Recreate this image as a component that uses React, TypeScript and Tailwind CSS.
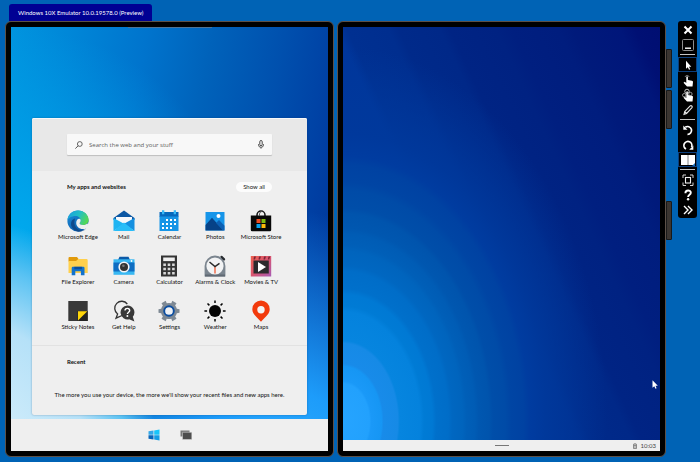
import type { ReactNode } from "react";

type IconProps = { children: ReactNode; box?: string; className?: string };

function Svg({ children, box = "0 0 22 22", className = "size-[22px]" }: IconProps) {
  return (
    <svg viewBox={box} className={className} aria-hidden="true" fill="none">
      {children}
    </svg>
  );
}

const apps: { name: string; icon: ReactNode }[] = [
  {
    name: "Microsoft Edge",
    icon: (
      <Svg>
        <defs>
          <linearGradient id="edgeTop" x1="0" y1="0.2" x2="1" y2="0.6">
            <stop offset="0" stopColor="#1c9fe0" />
            <stop offset="0.5" stopColor="#22bfc4" />
            <stop offset="1" stopColor="#56d94f" />
          </linearGradient>
          <linearGradient id="edgeSide" x1="0" y1="0" x2="0.6" y2="1">
            <stop offset="0" stopColor="#1b8fdc" />
            <stop offset="1" stopColor="#0d5cab" />
          </linearGradient>
        </defs>
        <circle cx="11" cy="11" r="10.6" fill="url(#edgeSide)" />
        <path d="M7.4 11.5c-.6 4.600 3 8.900 7.400 8.900 2 0 3.700-.8 5-2.200-1.900 2.300-5 3.500-8.300 3.500-5-1.200-8.300-5-7.300-9.500.6-2 2-3.300 3.800-3.700Z" fill="#114a8b" />
        <path d="M.4 10.200C.9 4.500 5.400.4 11 .4c6.200 0 10.600 4.500 10.600 9.300 0 3.200-2.400 5.300-5.400 5.300-2.600 0-3.600-.9-3.600-1.700 0-.8 1.100-1.100 1.100-3.100 0-2.300-2.200-4.300-5.300-4.300-3.800 0-7 2.200-8 4.300Z" fill="url(#edgeTop)" />
        <path d="M13.700 10.200c0 2-1.100 2.300-1.100 3.100 0 .8 1 1.700 3.600 1.700 1.800 0 3.200-.7 4.200-1.800l.9 1.700-1.500 3c-1.200.8-2.600 1.200-4 1.200-3.800 0-6.600-3-6.600-6.100 0-2.400 1.300-4.200 2.900-4.200.9 0 1.600.6 1.600 1.400Z" fill="#efefef" />
      </Svg>
    ),
  },
  {
    name: "Mail",
    icon: (
      <Svg>
        <path d="M.5 8 11 .4 21.500 8v2H.5Z" fill="#0b57a4" />
        <path d="M3 7h16v8H3Z" fill="#f6f8fb" />
        <path d="M.5 8v13L11 13.800Z" fill="#1fb4f2" />
        <path d="M21.500 8v13L11 13.800Z" fill="#1590e0" />
        <path d="M.5 21 11 12.500 21.500 21Z" fill="#28bdf8" />
      </Svg>
    ),
  },
  {
    name: "Calendar",
    icon: (
      <Svg>
        <path d="M1.500 2h19v5h-19Z" fill="#0669bd" />
        <path d="M1.500 6.500h19V21h-19Z" fill="#1795e6" />
        <path d="M4 .3h2.300v4H4ZM15.700.3H18v4h-2.300Z" fill="#38b9f6" />
        <path
          d="M8 9h2v2H8Zm4 0h2v2h-2Zm4 0h2v2h-2ZM4 13h2v2H4Zm4 0h2v2H8Zm4 0h2v2h-2Zm4 0h2v2h-2ZM4 17h2v2H4Zm4 0h2v2H8Zm4 0h2v2h-2Z"
          fill="#fff"
        />
      </Svg>
    ),
  },
  {
    name: "Photos",
    icon: (
      <Svg>
        <path d="M1.500 2h19v18.500h-19Z" fill="#1695e9" />
        <path d="m1.500 15 6.500-7.300L19.500 20.500h-18Z" fill="#064287" />
        <path d="m12 13 3-3 5.500 5.800v4.700h-1.200Z" fill="#0c60b4" />
        <circle cx="14.500" cy="6" r="2" fill="#fff" />
      </Svg>
    ),
  },
  {
    name: "Microsoft Store",
    icon: (
      <Svg>
        <path d="M7 7V5a4 4 0 0 1 8 0v2" stroke="#111" strokeWidth="1.500" />
        <path d="M9.500 5.500V3.800a3 3 0 0 1 3-2.500" stroke="#555" strokeWidth="1" />
        <path d="M.8 5.500h20.400V20a1.300 1.300 0 0 1-1.300 1.300H2.100A1.300 1.300 0 0 1 .8 20Z" fill="#080808" />
        <path d="M6.500 9h4v4h-4Z" fill="#f04e25" />
        <path d="M11.500 9h4v4h-4Z" fill="#80bb10" />
        <path d="M6.500 14h4v4h-4Z" fill="#08a4ef" />
        <path d="M11.500 14h4v4h-4Z" fill="#fdb90a" />
      </Svg>
    ),
  },
  {
    name: "File Explorer",
    icon: (
      <Svg>
        <path d="M1.500 3a1 1 0 0 1 1-1h7.500l1.500 2-1.500 2.500H1.500Z" fill="#e19a0b" />
        <path d="M1.500 6H9l2.300-2h8.200a1.200 1.200 0 0 1 1.200 1.200V18H1.500Z" fill="#ffd04d" />
        <path d="M4.700 20.300V13a1.200 1.200 0 0 1 1.200-1.200h10.400a1.200 1.200 0 0 1 1.200 1.200v7.300h-3.600v-4H8.300v4Z" fill="#1272cc" />
        <path d="M7.300 11.800h7.600v2.400H7.300Z" fill="#0c4f9c" />
      </Svg>
    ),
  },
  {
    name: "Camera",
    icon: (
      <Svg>
        <path d="M6.500 1.800h9L17 5H5Z" fill="#0c5aa8" />
        <path d="M.5 4.300h21v15.500H.5Z" fill="#38b8f2" />
        <path d="M.5 7.500h21v9H.5Z" fill="#0f6dc2" />
        <circle cx="11" cy="12" r="5.600" fill="#f3f5f7" />
        <circle cx="11" cy="12" r="4" fill="#333" />
        <circle cx="10.400" cy="10.800" r="1.300" fill="#777" />
        <circle cx="18.500" cy="6" r=".9" fill="#fff" />
      </Svg>
    ),
  },
  {
    name: "Calculator",
    icon: (
      <Svg>
        <path d="M3 .5h16v21H3Z" fill="#343434" />
        <path d="M5.200 2.500h11.600v3.600H5.200Z" fill="#f0f0f0" />
        <path
          d="M5.300 8.500h2.600v2.500H5.300Zm4.400 0h2.600v2.500H9.700Zm4.400 0h2.600v2.500h-2.600ZM5.300 12.700h2.600v2.500H5.300Zm4.400 0h2.600v2.500H9.700Zm4.400 0h2.600v2.500h-2.600ZM5.300 17h2.600v2.500H5.300Zm4.400 0h2.600v2.500H9.700Zm4.400 0h2.600v2.500h-2.600Z"
          fill="#d9d9d9"
        />
      </Svg>
    ),
  },
  {
    name: "Alarms & Clock",
    icon: (
      <Svg>
        <path d="M.6 11A10.400 10.400 0 0 1 21.400 11v10.400H.6Z" fill="#7b858f" />
        <path d="M1 19.500h20v2H1Z" fill="#606973" />
        <path d="m17.500 1.800 2.600 2.600" stroke="#272b30" strokeWidth="2.200" strokeLinecap="round" />
        <circle cx="11" cy="11" r="8.600" fill="#f2f3f4" />
        <path d="M11 11.500v7" stroke="#f05a35" strokeWidth="1.300" />
        <path d="M5.500 7 11 11.500l4.500-3.200" stroke="#292929" strokeWidth="1.500" />
      </Svg>
    ),
  },
  {
    name: "Movies & TV",
    icon: (
      <Svg>
        <defs>
          <linearGradient id="film" x1="0" y1="0" x2="1" y2="1">
            <stop offset="0" stopColor="#ee614f" />
            <stop offset="0.5" stopColor="#d95570" />
            <stop offset="1" stopColor="#a85bb5" />
          </linearGradient>
        </defs>
        <path d="M.8 1h20.400v20.500H.8Z" fill="url(#film)" />
        <path d="M4 1.500h2l-1 3H3.500Zm5 0h2l-1 3H8.500Zm5 0h2l-1 3h-1.500Zm4.500 0h1.700l-1 3h-1.400Z" fill="#7a2437" />
        <path d="M3.500 5.500h15.300v13H3.500Z" fill="#2c2a2d" />
        <path d="m8 7 8 5-8 5Z" fill="#fff" />
      </Svg>
    ),
  },
  {
    name: "Sticky Notes",
    icon: (
      <Svg>
        <path d="M1.300 1h19.400v20H1.300Z" fill="#383838" />
        <path d="M20.700 11v10H10.500V11Z" fill="#242424" />
        <path d="M20.300 11.300 11 20.600v-9.300Z" fill="#ffd60a" />
      </Svg>
    ),
  },
  {
    name: "Get Help",
    icon: (
      <Svg>
        <path d="M9 15.500 3 18.200l1.600-4.300A7 7 0 1 1 14.300 4" stroke="#333" strokeWidth="1.300" />
        <path d="M14.300 5.400a7 7 0 0 1 5.500 11.400l1.600 4.600-5.200-2.200A7 7 0 1 1 14.300 5.400Z" fill="#383838" />
        <path d="M12 10.500c0-3 4.700-2.700 4.700 0 0 1.700-2.300 1.700-2.300 3.500" stroke="#fff" strokeWidth="1.400" />
        <circle cx="14.400" cy="16" r="1" fill="#fff" />
      </Svg>
    ),
  },
  {
    name: "Settings",
    icon: (
      <Svg>
        <path
          d="m7.700.8 1 2.500a8 8 0 0 1 4.600 0l1-2.500 4.200 2.400-1.400 2.400a8 8 0 0 1 1.700 3.200l2.700.4v3.600l-2.700.4a8 8 0 0 1-1.700 3.200l1.400 2.400-4.200 2.400-1-2.500a8 8 0 0 1-4.600 0l-1 2.500-4.200-2.400 1.400-2.400a8 8 0 0 1-1.700-3.200l-2.700-.4V9.200l2.700-.4a8 8 0 0 1 1.700-3.200L3.500 3.200Z"
          fill="#7e8994"
        />
        <circle cx="11" cy="11" r="4.800" fill="#eef1f5" stroke="#0b4da0" strokeWidth="1.900" />
      </Svg>
    ),
  },
  {
    name: "Weather",
    icon: (
      <Svg>
        <circle cx="11" cy="11" r="6" fill="#050505" />
        <path
          d="M11 .4v2.700M11 18.900v2.700M.4 11h2.700M18.900 11h2.700M3.500 3.500l1.900 1.900M16.600 16.600l1.900 1.900M3.500 18.500l1.900-1.900M16.600 5.400l1.900-1.900"
          stroke="#050505"
          strokeWidth="1.500"
        />
      </Svg>
    ),
  },
  {
    name: "Maps",
    icon: (
      <Svg>
        <path d="M11 .5a8.700 8.700 0 0 1 8.700 8.700c0 4.300-3.500 7-8.700 12.500C5.800 16.200 2.300 13.500 2.300 9.200A8.700 8.700 0 0 1 11 .5Z" fill="#f23a0c" />
        <circle cx="11" cy="9.800" r="3.700" fill="#f3f3f3" />
      </Svg>
    ),
  },
];

type Tool = { name: string; icon: ReactNode; active?: boolean };

const hand = "M6 13.500 2.500 9.700l1.200-.9L5.300 10V4.300c0-1.300 1.600-1.300 1.600 0V7l4 .8c.8.200 1.100.6 1.100 1.300l-.5 4.400Z";

const toolGroups: Tool[][] = [
  [
    { name: "Close", icon: <path d="m3.500 3.500 7 7m0-7-7 7" stroke="#fff" strokeWidth="2" /> },
    {
      name: "Minimize",
      icon: (
        <>
          <rect x="1.500" y="1.500" width="11" height="11" rx="1" stroke="#8d8d8d" />
          <path d="M4 10.200h6" stroke="#fff" strokeWidth="1.400" />
        </>
      ),
    },
  ],
  [
    { name: "Mouse input", active: true, icon: <path d="M5 2.800v8l1.800-1.600 1.200 2.600 1.200-.6L8 8.700h2.300Z" fill="#fff" /> },
    { name: "Single-point input", icon: <><path d={hand} fill="#fff" /><path d="M4 4a2.200 2.200 0 0 1 4.200 0" stroke="#aaa" strokeWidth=".7" /></> },
    {
      name: "Multi-touch input",
      icon: (
        <>
          <path d={hand} fill="#fff" />
          <circle cx="6" cy="3.400" r="2.200" stroke="#ddd" strokeWidth=".9" />
          <circle cx="3.200" cy="7.200" r="1.700" stroke="#bbb" strokeWidth=".8" />
          <circle cx="9.400" cy="6" r="1.700" stroke="#bbb" strokeWidth=".8" />
        </>
      ),
    },
    {
      name: "Pen input",
      icon: <path d="m3 11.300.7-2.800 5.500-5.600c1-1 2.700.7 1.800 1.800L5.600 10.400Zm.8-2.700 1.700 1.700" stroke="#e5e5e5" strokeWidth="1.100" />,
    },
  ],
  [
    {
      name: "Rotate left",
      icon: <><path d="M4.300 4.300A3.900 3.900 0 1 1 6.500 11.300" stroke="#fff" strokeWidth="1.700" /><path d="M2.300 2.600v4.200h4.200Z" fill="#fff" /></>,
    },
    {
      name: "Rotate right",
      icon: <><path d="M5 11A4 4 0 1 1 10.600 9" stroke="#fff" strokeWidth="1.700" /><path d="M12.300 7.600v4.200H8.200Z" fill="#fff" /></>,
    },
    {
      name: "Dual screen",
      active: true,
      icon: <><path d="M0 2h14v10H0Z" fill="#fff" /><path d="M7 2v10" stroke="#666" strokeWidth=".8" /><path d="m14 10v3h-3Z" fill="#1268b8" /></>,
    },
  ],
  [
    {
      name: "Fit to screen",
      icon: (
        <>
          <path d="M2 5V2h3M9 2h3v3M12 9.500v3H9M5 12.500H2v-3" stroke="#d6d6d6" strokeWidth="1" />
          <rect x="4.500" y="4.500" width="5" height="5.500" stroke="#f2f2f2" strokeWidth="1.100" />
        </>
      ),
    },
    {
      name: "Help",
      icon: <><path d="M4.400 5.200c0-3.700 5.400-3.400 5.400-.4 0 2-2.700 2-2.700 4.200" stroke="#fff" strokeWidth="1.900" /><circle cx="7.100" cy="11.300" r="1.200" fill="#fff" /></>,
    },
    { name: "More tools", icon: <path d="m3 3 4 4-4 4m4-8 4 4-4 4" stroke="#fff" strokeWidth="1.400" /> },
  ],
];

function Toolbar() {
  return (
    <aside aria-label="Emulator tools" className="flex w-[19px] shrink-0 flex-col self-start rounded-[3px] bg-black py-px">
      {toolGroups.map((group, i) => (
        <div key={i}>
          {i > 0 && (
            <div className="px-0.5 py-0.5">
              <div className="h-px bg-[#c4c4c4]" />
            </div>
          )}
          {group.map((t) => (
            <button
              key={t.name}
              aria-label={t.name}
              className={
                t.active
                  ? "flex h-[15px] w-full items-center justify-center border border-[#0c3f7c]"
                  : "flex h-[15px] w-full items-center justify-center"
              }
            >
              <Svg box="0 0 14 14" className="size-[14px] shrink-0">
                {t.icon}
              </Svg>
            </button>
          ))}
        </div>
      ))}
    </aside>
  );
}

function Screen({ children }: { children: ReactNode }) {
  return (
    <section className="flex min-w-0 flex-1 rounded-[6px] border border-[#5c5048] bg-black p-[5px]">{children}</section>
  );
}

function StartPanel() {
  return (
    <main className="mx-[21px] mb-1 flex flex-col rounded-[2px] bg-[#efefef] shadow-[0_0_2px_rgba(0,40,90,0.4)]">
      <div className="rounded-t-[2px] border-t border-[#f8f8f8] bg-[#e8e8e8] px-[35px] pt-[15px] pb-4">
        <label className="flex h-[21px] items-center rounded-[1px] bg-[#f8f8f8] px-2 shadow-[0_1px_1px_rgba(0,0,0,0.18)]">
          <Svg box="0 0 8 8" className="size-2 shrink-0">
            <circle cx="4.800" cy="3" r="2.400" stroke="#444" strokeWidth=".8" />
            <path d="M3.100 4.800.4 7.600" stroke="#444" strokeWidth=".9" />
          </Svg>
          <input
            type="text"
            aria-label="Search"
            placeholder="Search the web and your stuff"
            className="mx-1.5 min-w-0 flex-1 bg-transparent font-['Open_Sans',sans-serif] text-[6px] leading-2 outline-none placeholder:text-[#606060]"
          />
          <button aria-label="Voice search">
            <Svg box="0 0 6 9" className="h-[9px] w-1.5">
              <rect x="1.800" y=".5" width="2.400" height="5.200" rx="1.200" stroke="#333" strokeWidth=".9" />
              <path d="M.5 4v.8a2.500 2.500 0 0 0 5 0V4M3 7.300v1.400" stroke="#333" strokeWidth=".8" />
            </Svg>
          </button>
        </label>
      </div>
      <div className="flex items-center justify-between px-[35px] pt-[11px]">
        <h2 className="text-[6px] leading-[10px] font-bold text-[#111]">My apps and websites</h2>
        <button className="h-[10px] rounded-full bg-[#fcfcfc] px-[7px] text-[6px] leading-[10px] text-[#222]">Show all</button>
      </div>
      <div className="mt-[18px] grid grid-cols-5 gap-y-[5px] px-[23px]">
        {apps.map((app) => (
          <button key={app.name} className="flex h-10 flex-col items-center">
            {app.icon}
            <span className="text-[6px] leading-[10px] whitespace-nowrap text-[#111]">{app.name}</span>
          </button>
        ))}
      </div>
      <div className="mt-[5px] border-t border-[#e2e2e2] pt-[11px]">
        <h2 className="px-[35px] text-[6px] leading-[10px] font-bold text-[#111]">Recent</h2>
        <p className="mt-[23px] pb-[15px] text-center text-[6px] leading-[10px] whitespace-nowrap text-[#111]">
          The more you use your device, the more we'll show your recent files and new apps here.
        </p>
      </div>
    </main>
  );
}

export default function App() {
  return (
    <div className="flex min-h-screen flex-col bg-[#0063b5] pr-[3px] pb-[5px] pl-[5px] font-['Lato','Open_Sans',sans-serif]">
      <header className="flex h-[21px] items-end pl-1">
        <h1 className="flex h-[17px] items-center rounded-t-[3px] bg-[#000093] px-[9px] text-[6px] leading-[10px] whitespace-nowrap text-white">
          Windows 10X Emulator 10.0.19578.0 (Preview)
        </h1>
      </header>
      <div className="flex flex-1">
        <div className="flex min-w-0 flex-1 gap-[3px]">
          <Screen>
            <div className="flex flex-1 flex-col bg-[radial-gradient(ellipse_55%_62%_at_-8%_108%,#e0f3fc_0%,#b5e1f8_60%,#5cc3f3_82%,transparent_100%),radial-gradient(ellipse_75%_65%_at_85%_108%,#30b0ff_0%,#1d9cfa_35%,transparent_100%),radial-gradient(ellipse_70%_50%_at_0%_50%,#00aaee_0%,transparent_100%),linear-gradient(100deg,#0094df_0%,#0087d8_15%,#0074cd_35%,#0062ba_52%,#0050ae_70%,#003fa3_85%,#003194_100%)]">
              <div className="mb-auto h-px w-[84px] self-center bg-[#4d7396]" />
              <StartPanel />
              <nav aria-label="Taskbar" className="flex h-8 items-center justify-center gap-5 bg-[#efefef]">
                <button aria-label="Start">
                  <Svg box="0 0 12 12" className="size-3">
                    <path d="M.5 2.200 5.500 1.500v4.200h-5Z" fill="#35a8e8" />
                    <path d="M6.200 1.400 11.500.6v5.100H6.200Z" fill="#18c5fa" />
                    <path d="M.5 6.300h5v4.200l-5-.7Z" fill="#0865ba" />
                    <path d="M6.200 6.300h5.300v5.100l-5.300-.8Z" fill="#159de5" />
                  </Svg>
                </button>
                <button aria-label="Task view">
                  <Svg box="0 0 12 12" className="size-3">
                    <path d="M.5 1.500h9v6h-9Z" fill="#777" />
                    <path d="M2.500 3.300h9.300v7.200H2.500Z" fill="#4e4e4e" stroke="#ddd" strokeWidth=".5" />
                  </Svg>
                </button>
              </nav>
            </div>
          </Screen>
          <Screen>
            <div className="relative flex flex-1 flex-col justify-end bg-[radial-gradient(ellipse_64%_68%_at_0%_93%,#26a4ff_0%,#22a1fd_13%,#1a99f8_14%,#1696f4_19%,#188be9_20%,#168ae6_27%,#0685df_28%,#0482dd_38%,#007bd5_40%,#0079d4_44%,#0070cb_46%,#006dc8_52%,#0067c1_54%,#0064bd_59%,#005fb8_61%,#005cb5_65%,#0057b0_67%,#0054ad_72%,#004ea9_74%,#004ba7_80%,#0045a4_83%,#0042a2_89%,#003ca0_92%,rgba(0,57,156,0.9)_100%,rgba(0,54,155,0)_130%),linear-gradient(65deg,#00369b_0%,#00369b_37%,#003091_39%,#002e8f_47%,#002a8a_49%,#002888_57%,#002484_59%,#002282_68%,#001f80_71%,#001d7e_80%,#001a7b_83%,#00167a_92%,#001074_95%,#000e72_100%)]">
              <svg viewBox="0 0 6 9" className="absolute right-[2px] bottom-[62px] h-[9px] w-1.5" aria-hidden="true">
                <path d="M.5.300v7.500l1.800-1.600 1.200 2.500 1.100-.5-1.100-2.500h2.300Z" fill="#fff" />
              </svg>
              <footer className="grid h-[11px] grid-cols-3 items-center bg-[#efefef] px-1 text-[#444]">
                <span className="col-start-2 h-px w-[14px] justify-self-center bg-[#777]" />
                <span className="flex items-center gap-1 justify-self-end text-[6px] leading-[8px]">
                  <Svg box="0 0 4 6" className="h-1.5 w-1">
                    <path d="M.5 1.200h3v4.300h-3ZM1.500.5h1M.8 2.500h2.400M.8 4h2.400" stroke="#666" strokeWidth=".7" />
                  </Svg>
                  10:03
                </span>
              </footer>
            </div>
          </Screen>
        </div>
        <div className="flex w-3 shrink-0 flex-col gap-0.5 pt-7 pr-1.5">
          <button aria-label="Volume up" className="h-[39px] rounded-r-[1px] border border-[#191919] bg-[#3b3531]" />
          <button aria-label="Volume down" className="h-[39px] rounded-r-[1px] border border-[#191919] bg-[#3b3531]" />
          <button aria-label="Power" className="mt-[70px] h-[39px] rounded-r-[1px] border border-[#191919] bg-[#3b3531]" />
        </div>
        <Toolbar />
      </div>
    </div>
  );
}
